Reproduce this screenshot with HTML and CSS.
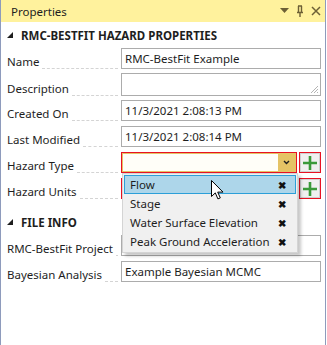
FILE: index.html
```html
<!DOCTYPE html>
<html lang="en">
<head>
    <meta charset="UTF-8">
    <title>Properties</title>
    <link rel="stylesheet" href="styles.css">
</head>
<body>
    <div class="panel">
        <div class="titlebar">
            <span class="title">Properties</span>
            <div class="title-icons">
                <svg width="9" height="6" viewBox="0 0 9 6"><polygon points="0,0 9,0 4.5,5" fill="#6d6036"/></svg>
                <svg width="8" height="12" viewBox="0 0 8 12"><path d="M2 1h4M2.5 1v6M5.5 1v6M1 7.5h6M4 8v4" stroke="#6d6036" stroke-width="1.4" fill="none"/></svg>
                <svg width="10" height="10" viewBox="0 0 10 10"><path d="M1 1L9 9M9 1L1 9" stroke="#6d6036" stroke-width="1.5"/></svg>
            </div>
        </div>

        <div class="section">
            <div class="section-header">
                <svg width="6" height="6" viewBox="0 0 6 6"><polygon points="6,0 6,6 0,6" fill="#1e1e1e"/></svg>
                <span>RMC-BESTFIT HAZARD PROPERTIES</span>
            </div>
            <div class="row">
                <div class="label"><span>Name</span><i class="leader"></i></div>
                <div class="field">RMC-BestFit Example</div>
            </div>
            <div class="row">
                <div class="label"><span>Description</span><i class="leader"></i></div>
                <div class="field area">
                    <svg class="grip" width="9" height="9" viewBox="0 0 9 9"><path d="M8 1L1 8M8 4L4 8M8 7L7 8" stroke="#b4b4b4" stroke-width="1"/></svg>
                </div>
            </div>
            <div class="row">
                <div class="label"><span>Created On</span><i class="leader"></i></div>
                <div class="field">11/3/2021 2:08:13 PM</div>
            </div>
            <div class="row">
                <div class="label"><span>Last Modified</span><i class="leader"></i></div>
                <div class="field">11/3/2021 2:08:14 PM</div>
            </div>
            <div class="row">
                <div class="label"><span>Hazard Type</span><i class="leader"></i></div>
                <div class="combo-line">
                    <div class="combo invalid">
                        <div class="combo-inner">
                            <div class="combo-text"></div>
                            <div class="combo-btn">
                                <svg width="7" height="5" viewBox="0 0 7 5"><path d="M1 1l2.5 2.5L6 1" stroke="#1e1e1e" stroke-width="1.4" fill="none"/></svg>
                            </div>
                        </div>
                    </div>
                    <div class="add invalid">
                        <div class="add-btn"><svg width="14" height="14" viewBox="0 0 14 14"><path d="M7 0v14M0 7h14" stroke="#3a9a3a" stroke-width="2.6"/></svg></div>
                    </div>
                </div>
            </div>
            <div class="row">
                <div class="label"><span>Hazard Units</span><i class="leader"></i></div>
                <div class="combo-line">
                    <div class="combo invalid plain"></div>
                    <div class="add invalid">
                        <div class="add-btn"><svg width="14" height="14" viewBox="0 0 14 14"><path d="M7 0v14M0 7h14" stroke="#3a9a3a" stroke-width="2.6"/></svg></div>
                    </div>
                </div>
            </div>
        </div>

        <div class="section second">
            <div class="section-header">
                <svg width="6" height="6" viewBox="0 0 6 6"><polygon points="6,0 6,6 0,6" fill="#1e1e1e"/></svg>
                <span>FILE INFO</span>
            </div>
            <div class="row">
                <div class="label"><span>RMC-BestFit Project</span><i class="leader"></i></div>
                <div class="field">Example BestFit Project.bestfit</div>
            </div>
            <div class="row">
                <div class="label"><span>Bayesian Analysis</span><i class="leader"></i></div>
                <div class="field">Example Bayesian MCMC</div>
            </div>
        </div>

        <!-- open dropdown of Hazard Type -->
        <ul class="dropdown">
            <li class="active"><span>Flow</span><b>&#x2716;</b></li>
            <li><span>Stage</span><b>&#x2716;</b></li>
            <li><span>Water Surface Elevation</span><b>&#x2716;</b></li>
            <li><span>Peak Ground Acceleration</span><b>&#x2716;</b></li>
        </ul>

        <svg class="cursor" width="13" height="20" viewBox="0 0 13 20"><path d="M0.5 0.5v16l3.8-3.6 2.6 6 2.4-1-2.6-5.8h5.3z" fill="#fff" stroke="#000" stroke-width="1"/></svg>
    </div>
</body>
</html>
```

FILE: styles.css
```css
body {
    margin: 0;
    font-family: "Segoe UI", "Noto Sans", sans-serif;
    font-size: 11.5px;
    color: #1e1e1e;
    background: #fff;
}

.panel {
    position: relative;
    width: 324px;
    height: 345px;
    border-left: 1px solid #8e9bbc;
    border-right: 1px solid #8e9bbc;
    background: #fff;
}

.titlebar {
    height: 22px;
    background: #fff29d;
    display: flex;
    align-items: center;
    justify-content: space-between;
    padding: 0 4px 0 10px;
}

.title {
    font-size: 11.5px;
    color: #1e1e1e;
}

.title-icons {
    display: flex;
    align-items: center;
    gap: 7px;
}

.section-header {
    height: 26px;
    display: flex;
    align-items: center;
    gap: 8px;
    padding-left: 6px;
    font-weight: bold;
    font-size: 11.5px;
}

.section.second {
    margin-top: 10px;
}

.row {
    display: grid;
    grid-template-columns: 120px 200px;
    height: 21px;
    margin-bottom: 5px;
}

.label {
    display: flex;
    align-items: flex-end;
    padding-left: 6px;
    gap: 3px;
    line-height: 15px;
    padding-right: 3px;
    white-space: nowrap;
}

.leader {
    flex: 1;
    border-bottom: 1px dashed #d4d4d4;
    height: 1px;
}

.field {
    position: relative;
    box-sizing: border-box;
    border: 1px solid #acacac;
    height: 21px;
    padding: 0 3px;
    line-height: 19px;
    white-space: nowrap;
    overflow: hidden;
}

.field.area {
    height: 23px;
    margin-top: -1px;
}

.grip {
    position: absolute;
    right: 1px;
    bottom: 1px;
}

.combo-line {
    display: flex;
    gap: 2px;
}

.combo {
    box-sizing: border-box;
    width: 176px;
    height: 21px;
    background: #fff;
}

.invalid {
    border: 1px solid #e81123;
}

.combo-inner {
    display: flex;
    height: 100%;
    box-sizing: border-box;
    border: 1px solid #e5c365;
}

.combo-text {
    flex: 1;
    background: #fffef8;
}

.combo-btn {
    width: 17px;
    background: #e5c365;
    display: flex;
    align-items: center;
    justify-content: center;
}

.add {
    box-sizing: border-box;
    width: 22px;
    height: 21px;
}

.add-btn {
    box-sizing: border-box;
    height: 100%;
    border: 1px solid #d0d0d0;
    background: #f0f0f0;
    display: flex;
    align-items: center;
    justify-content: center;
}

.dropdown {
    position: absolute;
    left: 121px;
    top: 173px;
    width: 176px;
    margin: 0;
    padding: 1px;
    box-sizing: border-box;
    list-style: none;
    background: #f0f0f0;
    border: 1px solid #d4d4d4;
    box-shadow: 3px 3px 3px rgba(0, 0, 0, 0.22);
}

.dropdown li {
    height: 19px;
    box-sizing: border-box;
    display: flex;
    align-items: center;
    justify-content: space-between;
    padding: 0 9px 0 5px;
    border: 1px solid transparent;
}

.dropdown li.active {
    background: #add6ea;
    border-color: #2c9fd8;
}

.dropdown b {
    font-size: 10px;
    color: #111;
}

.cursor {
    position: absolute;
    left: 210px;
    top: 180px;
}
```
